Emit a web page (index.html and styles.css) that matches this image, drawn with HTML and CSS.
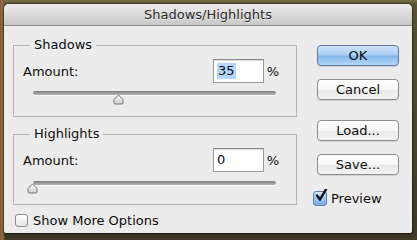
FILE: index.html
```html
<!DOCTYPE html>
<html>
<head>
<meta charset="utf-8">
<link rel="stylesheet" href="styles.css">
</head>
<body>
<div class="dialog">
  <div class="titlebar">Shadows/Highlights</div>
  <div class="content">
    <div class="left">
      <div class="group g1">
        <span class="legend">Shadows</span>
        <div class="row">
          <span class="label">Amount:</span>
          <span class="field"><span class="sel">35</span></span>
          <span class="pct">%</span>
        </div>
        <div class="slider">
          <div class="track"></div>
          <svg class="thumb" style="left:80px" width="11" height="11" viewBox="0 0 11 11"><defs><linearGradient id="tg1" x1="0" y1="0" x2="0" y2="1"><stop offset="0" stop-color="#fbfbfb"/><stop offset="1" stop-color="#cdcdcd"/></linearGradient></defs><path d="M1 5.5 L5.5 1 L10 5.5 L10 8.8 Q10 10 8.8 10 L2.2 10 Q1 10 1 8.8 Z" fill="url(#tg1)" stroke="#767676" stroke-width="1" stroke-linejoin="round"/></svg>
        </div>
      </div>
      <div class="group g2">
        <span class="legend">Highlights</span>
        <div class="row">
          <span class="label">Amount:</span>
          <span class="field">0</span>
          <span class="pct">%</span>
        </div>
        <div class="slider">
          <div class="track"></div>
          <svg class="thumb" style="left:-6px" width="11" height="11" viewBox="0 0 11 11"><defs><linearGradient id="tg2" x1="0" y1="0" x2="0" y2="1"><stop offset="0" stop-color="#fbfbfb"/><stop offset="1" stop-color="#cdcdcd"/></linearGradient></defs><path d="M1 5.5 L5.5 1 L10 5.5 L10 8.8 Q10 10 8.8 10 L2.2 10 Q1 10 1 8.8 Z" fill="url(#tg2)" stroke="#767676" stroke-width="1" stroke-linejoin="round"/></svg>
        </div>
      </div>
      <label class="check more"><span class="box"></span><span>Show More Options</span></label>
    </div>
    <div class="right">
      <button class="btn ok">OK</button>
      <button class="btn cancel">Cancel</button>
      <button class="btn load">Load...</button>
      <button class="btn save">Save...</button>
      <label class="check preview"><span class="box on"><svg width="14" height="14" viewBox="0 0 14 14"><path d="M3 6.5 L6 10.5 L12 0.5" fill="none" stroke="#111" stroke-width="2.4" stroke-linecap="round" stroke-linejoin="round"/></svg></span><span>Preview</span></label>
    </div>
  </div>
</div>
</body>
</html>
```

FILE: styles.css
```css
html, body {
  margin: 0;
  padding: 0;
}
body {
  width: 417px;
  height: 240px;
  overflow: hidden;
  background:
    linear-gradient(90deg, #7a5a3a 0px, #a0704a 2px, #6a5a3c 4px, transparent 5px),
    linear-gradient(180deg, #7a7048 0px, #5a5434 4px, #3f3a28 100%);
  font-family: "DejaVu Sans", "Liberation Sans", sans-serif;
  font-size: 13px;
  color: #0c0c0c;
  padding-top: 4px;
  box-sizing: border-box;
  padding-left: 4px;
}
.dialog {
  width: 408px;
  height: 229px;
  background: #ececec;
  border-radius: 5px 5px 2px 2px;
  box-shadow: 0 0 0 1px rgba(0,0,0,0.25), 0 2px 4px rgba(0,0,0,0.4);
  overflow: hidden;
}
.titlebar {
  height: 21px;
  line-height: 22px;
  text-align: center;
  font-size: 13px;
  color: #2a2a2a;
  background: linear-gradient(180deg, #ececec 0%, #dadada 50%, #c8c8c8 100%);
  border-bottom: 1px solid #8a8a8a;
  text-shadow: 0 1px 0 rgba(255,255,255,0.6);
}
.content {
  display: flex;
  padding: 19px 0 0 9px;
}
.left {
  width: 284px;
  display: flex;
  flex-direction: column;
}
.group {
  position: relative;
  border: 1px solid #b4b4b4;
  box-sizing: border-box;
  padding: 13px 17px 0 9px;
}
.g1 { height: 72px; }
.g2 { height: 71px; margin-top: 17px; }
.legend {
  position: absolute;
  top: -9px;
  left: 16px;
  padding: 0 4px;
  background: #ececec;
  line-height: 16px;
}
.row {
  display: flex;
  align-items: center;
  height: 24px;
}
.label {
  flex: 1;
  padding-top: 1px;
}
.field {
  width: 51px;
  height: 24px;
  box-sizing: border-box;
  border: 1px solid #9c9c9c;
  border-top-color: #8a8a8a;
  background: #fff;
  box-shadow: inset 0 1px 1px rgba(0,0,0,0.15);
  padding: 0 0 0 3px;
  line-height: 22px;
  display: flex;
  align-items: center;
}
.sel {
  background: #b4d5fd;
  line-height: 16px;
  padding: 0 1px;
}
.pct {
  width: 15px;
  text-align: right;
}
.slider {
  position: relative;
  margin: 8px 0 0 10px;
  width: 243px;
  height: 14px;
}
.track {
  height: 4px;
  border-radius: 2px;
  background: linear-gradient(180deg, #7c7c7c 0%, #9a9a9a 50%, #b4b4b4 100%);
  box-shadow: 0 1px 0 rgba(255,255,255,0.7);
}
.thumb {
  position: absolute;
  top: 3px;
}
.g2 .slider { margin-top: 9px; }
.g2 .thumb { top: 2px; }
.check {
  display: flex;
  align-items: center;
  gap: 5px;
}
.more {
  margin-top: 8px;
  margin-left: 2px;
}
.box {
  width: 13px;
  height: 13px;
  box-sizing: border-box;
  border: 1px solid #8c8c8c;
  border-radius: 3px;
  background: linear-gradient(180deg, #ffffff 0%, #f2f2f2 50%, #e4e4e4 100%);
  box-shadow: 0 1px 0 rgba(255,255,255,0.6);
  position: relative;
  flex: none;
}
.box.on {
  border-color: #5b7ea8;
  background: linear-gradient(180deg, #d3e5f8 0%, #9bc4ee 50%, #7aaee6 100%);
}
.box.on svg {
  position: absolute;
  left: 0px;
  top: -3px;
}
.right {
  margin-left: 20px;
  width: 82px;
  display: flex;
  flex-direction: column;
}
.btn {
  font-family: "DejaVu Sans", "Liberation Sans", sans-serif;
  font-size: 13px;
  color: #0c0c0c;
  height: 21px;
  padding: 0;
  border: 1px solid #8e8e8e;
  border-radius: 4px;
  background: linear-gradient(180deg, #ffffff 0%, #f6f6f6 50%, #e9e9e9 55%, #f4f4f4 100%);
  box-shadow: 0 1px 1px rgba(0,0,0,0.12);
  line-height: 19px;
}
.ok {
  border-color: #5a7ba6;
  background: linear-gradient(180deg, #cfe3f8 0%, #a9cdf2 45%, #85b7ec 55%, #b4d8f8 100%);
}
.cancel { margin-top: 13px; }
.load { margin-top: 20px; }
.save { margin-top: 13px; height: 21px; }
.preview {
  margin-top: 16px;
  margin-left: -4px;
  gap: 4px;
}
.preview .box {
  width: 14px;
  height: 15px;
}
```
